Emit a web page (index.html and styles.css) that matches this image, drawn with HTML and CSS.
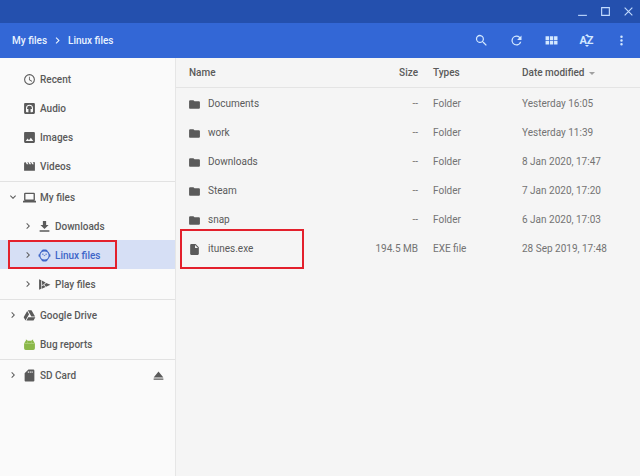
FILE: index.html
```html
<!DOCTYPE html>
<html lang="en">
<head>
    <meta charset="UTF-8" />
    <meta name="viewport" content="width=device-width, initial-scale=1.0" />
    <title>Files</title>
    <link rel="stylesheet" href="styles.css">
</head>
<body>
<svg class="sprite" aria-hidden="true">
    <symbol id="chevron" viewBox="0 0 24 24"><path d="M8.6 16.6 13.2 12 8.6 7.4 10 6l6 6-6 6z"/></symbol>
    <symbol id="folder" viewBox="0 0 24 24"><path d="M10 4H4a2 2 0 0 0-2 2v12c0 1.100.9 2 2 2h16a2 2 0 0 0 2-2V8a2 2 0 0 0-2-2h-8z"/></symbol>
</svg>

<div class="titlebar">
    <button class="window-btn" aria-label="Minimize"><svg viewBox="0 0 10 10"><path d="M1 8.500h8" /></svg></button>
    <button class="window-btn" aria-label="Maximize"><svg viewBox="0 0 10 10"><path d="M1.500 1.500h7v7h-7z" /></svg></button>
    <button class="window-btn" aria-label="Close"><svg viewBox="0 0 10 10"><path d="M1.500 1.500l7 7M8.500 1.500l-7 7" /></svg></button>
</div>

<header class="toolbar">
    <nav class="breadcrumb">
        <a href="#">My files</a>
        <svg class="icon"><use href="#chevron" /></svg>
        <a href="#">Linux files</a>
    </nav>
    <div class="actions">
        <button aria-label="Search"><svg viewBox="0 0 24 24"><path d="M15.500 14h-.8l-.3-.3A6.500 6.500 0 1 0 13.700 14.400l.3.3v.8l5 5 1.500-1.500zm-6 0a4.500 4.500 0 1 1 0-9 4.500 4.500 0 0 1 0 9z"/></svg></button>
        <button aria-label="Refresh"><svg viewBox="0 0 24 24"><path d="M17.650 6.350A8 8 0 1 0 19.730 14h-2.080A6 6 0 1 1 12 6c1.660 0 3.140.69 4.220 1.780L13 11h7V4z"/></svg></button>
        <button aria-label="Switch to thumbnail view"><svg viewBox="0 0 24 24"><path d="M2.500 5h5.500v6H2.500zM9.300 5h5.500v6H9.300zM16.100 5h5.500v6h-5.500zM2.500 12.500H8v6H2.500zM9.300 12.500h5.500v6H9.300zM16.100 12.500h5.500v6h-5.500z"/></svg></button>
        <button class="sort-btn" aria-label="Sort options"><span class="caret up"></span>AZ<span class="caret down"></span></button>
        <button aria-label="More"><svg viewBox="0 0 24 24"><path d="M12 8a2 2 0 1 0 0-4 2 2 0 0 0 0 4zm0 2a2 2 0 1 0 0 4 2 2 0 0 0 0-4zm0 6a2 2 0 1 0 0 4 2 2 0 0 0 0-4z"/></svg></button>
    </div>
</header>

<div class="content">
    <nav class="sidebar">
        <div class="group">
            <a class="item" href="#">
                <span class="chevron"></span>
                <svg class="icon" viewBox="0 0 24 24"><path d="M12 2a10 10 0 1 0 0 20 10 10 0 0 0 0-20zm0 18a8 8 0 1 1 0-16 8 8 0 0 1 0 16zM12.500 7H11v6l5.200 3.200.8-1.300-4.500-2.700z"/></svg>
                Recent
            </a>
            <a class="item" href="#">
                <span class="chevron"></span>
                <svg class="icon" viewBox="0 0 24 24"><path fill-rule="evenodd" d="M4 2h16a2 2 0 0 1 2 2v16a2 2 0 0 1-2 2H4a2 2 0 0 1-2-2V4c0-1.100.9-2 2-2zm8 3a6.500 6.500 0 0 0-6.500 6.500V17c0 1.100.9 2 2 2H10v-6H7.500v-1.500a4.500 4.500 0 0 1 9 0V13H14v6h2.500a2 2 0 0 0 2-2v-5.500A6.500 6.500 0 0 0 12 5z"/></svg>
                Audio
            </a>
            <a class="item" href="#">
                <span class="chevron"></span>
                <svg class="icon" viewBox="0 0 24 24"><path fill-rule="evenodd" d="M4 2h16a2 2 0 0 1 2 2v16a2 2 0 0 1-2 2H4a2 2 0 0 1-2-2V4c0-1.100.9-2 2-2zm1 16.500h14l-4.500-6-3.500 4.500-2.500-3z"/></svg>
                Images
            </a>
            <a class="item" href="#">
                <span class="chevron"></span>
                <svg class="icon" viewBox="0 0 24 24"><path d="m18 4 2 4h-3l-2-4h-2l2 4h-3l-2-4H8l2 4H7L5 4H4a2 2 0 0 0-2 2v14h20V4z"/></svg>
                Videos
            </a>
        </div>
        <div class="group">
            <a class="item" href="#">
                <svg class="chevron open"><use href="#chevron" /></svg>
                <svg class="icon" viewBox="0 0 24 24"><path fill-rule="evenodd" d="M20 18c1.100 0 2-.9 2-2V5a2 2 0 0 0-2-2H4a2 2 0 0 0-2 2v11c0 1.100.9 2 2 2H0v3h24v-3zM4.500 5.500h15v10h-15z"/></svg>
                My files
            </a>
            <a class="item sub" href="#">
                <svg class="chevron"><use href="#chevron" /></svg>
                <svg class="icon" viewBox="0 0 24 24"><path d="M19.500 9H15V2H9v7H4.500l7.500 7.500zM3 19v2.500h18V19z"/></svg>
                Downloads
            </a>
            <a class="item sub selected" href="#">
                <svg class="chevron"><use href="#chevron" /></svg>
                <svg class="icon" viewBox="0 0 24 24"><path fill-rule="evenodd" d="M7 2.500 9 1h6l2 1.500 1 1.800a10 10 0 0 1 3.500 5.200L23 10v4l-1.500.5a10 10 0 0 1-3.500 5.200l-1 1.800-2 1.500H9l-2-1.500-1-1.800a10 10 0 0 1-3.500-5.200L1 14v-4l1.500-.5A10 10 0 0 1 6 4.300zM12 4.500a7.500 7.500 0 1 0 0 15 7.500 7.500 0 0 0 0-15z"/><circle cx="9" cy="9.500" r="1.300"/><circle cx="15" cy="9.500" r="1.300"/><path d="M10 11.500h4l-2 2z"/></svg>
                Linux files
                <span class="highlight"></span>
            </a>
            <a class="item sub" href="#">
                <svg class="chevron"><use href="#chevron" /></svg>
                <svg class="icon" viewBox="0 0 24 24"><path d="M2 2.500 6 4v16l-4 1.500zM7 4.500l7 4-6 5.500zM15 9l8 3.500-8 3.500-3.500-3.700zM7 15.200l3.500-2 3.500 3.300-7 3.500z"/></svg>
                Play files
            </a>
        </div>
        <div class="group">
            <a class="item" href="#">
                <svg class="chevron"><use href="#chevron" /></svg>
                <svg class="icon" viewBox="0 0 24 24"><path d="M7.700 3.500 1.200 15l3.400 6 6.600-11.500zM9.700 15l-3.400 6h13.100l3.400-6zM22.300 14 15.700 2.500H8.900L15.400 14z"/></svg>
                Google Drive
            </a>
            <a class="item" href="#">
                <span class="chevron"></span>
                <svg class="icon green" viewBox="0 0 24 24"><path d="M5 3h2l1.500 2h7L17 3h2l-.5 2.500c1.500.7 2.500 2 2.500 3.500h1v10a3 3 0 0 1-3 3H5a3 3 0 0 1-3-3V9h1c0-1.500 1-2.800 2.500-3.500z"/><path class="light" d="M2 9.500h20v1H2zM8 7h1.200v1.200H8zM15 7h1.200v1.200H15z"/></svg>
                Bug reports
            </a>
        </div>
        <div class="group">
            <a class="item" href="#">
                <svg class="chevron"><use href="#chevron" /></svg>
                <svg class="icon" viewBox="0 0 24 24"><path fill-rule="evenodd" d="M19 1h-9L3 8v13c0 1.100.9 2 2 2h14a2 2 0 0 0 2-2V3a2 2 0 0 0-2-2zM9 7.500h1.500V4H9zm3.500 0H14V4h-1.500zm3.500 0h1.500V4H16z"/></svg>
                SD Card
                <svg class="icon eject" viewBox="0 0 24 24"><path d="M3 17.500h18V20H3zM12 4.500 3 15.500h18z"/></svg>
            </a>
        </div>
    </nav>

    <main class="files">
        <table>
            <thead>
                <tr>
                    <th class="name">Name</th>
                    <th class="size">Size</th>
                    <th class="type">Types</th>
                    <th class="date">Date modified<span class="caret down"></span></th>
                </tr>
            </thead>
            <tbody>
                <tr>
                    <td class="name"><svg class="icon"><use href="#folder" /></svg>Documents</td>
                    <td class="size">--</td>
                    <td>Folder</td>
                    <td>Yesterday 16:05</td>
                </tr>
                <tr>
                    <td class="name"><svg class="icon"><use href="#folder" /></svg>work</td>
                    <td class="size">--</td>
                    <td>Folder</td>
                    <td>Yesterday 11:39</td>
                </tr>
                <tr>
                    <td class="name"><svg class="icon"><use href="#folder" /></svg>Downloads</td>
                    <td class="size">--</td>
                    <td>Folder</td>
                    <td>8 Jan 2020, 17:47</td>
                </tr>
                <tr>
                    <td class="name"><svg class="icon"><use href="#folder" /></svg>Steam</td>
                    <td class="size">--</td>
                    <td>Folder</td>
                    <td>7 Jan 2020, 17:20</td>
                </tr>
                <tr>
                    <td class="name"><svg class="icon"><use href="#folder" /></svg>snap</td>
                    <td class="size">--</td>
                    <td>Folder</td>
                    <td>6 Jan 2020, 17:03</td>
                </tr>
                <tr>
                    <td class="name"><svg class="icon" viewBox="0 0 24 24"><path fill-rule="evenodd" d="M6 2a2 2 0 0 0-2 2v16c0 1.100.9 2 2 2h12a2 2 0 0 0 2-2V8l-6-6zm7 7V3.500L18.500 9z"/></svg>itunes.exe<span class="highlight"></span></td>
                    <td class="size">194.5 MB</td>
                    <td>EXE file</td>
                    <td>28 Sep 2019, 17:48</td>
                </tr>
            </tbody>
        </table>
    </main>
</div>
</body>
</html>
```
FILE: styles.css
```css
* {
    box-sizing: border-box;
}

body {
    margin: 0;
    min-height: 100vh;
    display: flex;
    flex-direction: column;
    font-family: Roboto, "Liberation Sans", sans-serif;
    font-size: 10px;
    color: #5a5a5a;
    background: #f5f5f5;
}

a {
    color: inherit;
    text-decoration: none;
}

button {
    display: flex;
    align-items: center;
    justify-content: center;
    padding: 0;
    border: none;
    background: none;
    font: inherit;
    color: inherit;
    cursor: pointer;
}

svg {
    fill: currentColor;
    flex: none;
}

.sprite {
    display: none;
}

.icon {
    width: 13px;
    height: 13px;
}

/* window frame */
.titlebar {
    display: flex;
    justify-content: flex-end;
    height: 23px;
    background: #2450ae;
    color: #c3dcff;
}

.window-btn {
    width: 23px;
}

.window-btn svg {
    width: 11px;
    height: 11px;
    fill: none;
    stroke: currentColor;
}

.toolbar {
    display: flex;
    justify-content: space-between;
    height: 35px;
    padding: 0 1px 0 12px;
    background: #3367d6;
    color: #e8f3ff;
}

.breadcrumb {
    display: flex;
    align-items: center;
    gap: 4px;
    font-weight: 500;
}

.actions {
    display: flex;
    color: #d3e8ff;
}

.actions button {
    width: 35px;
}

.actions svg {
    width: 15px;
    height: 15px;
}

.actions .sort-btn {
    flex-direction: column;
    font-size: 11px;
    font-weight: 700;
    line-height: 9px;
}

.caret {
    border: 2px solid transparent;
}

.caret.up {
    border-top: none;
    border-bottom-color: currentColor;
}

.caret.down {
    border-bottom: none;
    border-top-color: currentColor;
}

.content {
    flex: 1;
    display: flex;
}

/* sidebar */
.sidebar {
    flex: none;
    width: 176px;
    padding-top: 6px;
    background: #fafafa;
    border-right: 1px solid #e6e6e6;
    font-weight: 500;
}

.group {
    padding-bottom: 1px;
    border-bottom: 1px solid #e2e2e2;
}

.group:last-child {
    border-bottom: none;
}

.item {
    position: relative;
    display: flex;
    align-items: center;
    gap: 4px;
    height: 29px;
    padding: 1px 10px 0 7px;
}

.item.sub {
    padding-left: 22px;
}

.item.selected {
    background: #d6dff5;
    color: #3f66c8;
}

.chevron {
    width: 12px;
    height: 12px;
    color: #5a5a5a;
}

.chevron.open {
    transform: rotate(90deg);
}

.green {
    color: #8bb84a;
}

.light {
    fill: #c5e0a0;
}

.eject {
    margin-left: auto;
}

/* file list */
.files {
    flex: 1;
}

table {
    width: 100%;
    table-layout: fixed;
    border-collapse: separate;
    border-spacing: 0;
}

th,
td {
    height: 29px;
    padding: 0;
    text-align: left;
    white-space: nowrap;
}

th {
    height: 30px;
    font-weight: 500;
    border-bottom: 1px solid #e4e4e4;
}

td {
    padding-top: 2px;
    color: #737373;
}

th.name {
    padding-left: 13px;
}

td.name {
    position: relative;
    padding-left: 12px;
    color: #5a5a5a;
}

td.name .icon {
    margin: -4px 7px -4px 0;
    vertical-align: middle;
}

.size {
    width: 80px;
    padding-right: 15px;
    text-align: right;
}

.type {
    width: 89px;
}

.date {
    width: 118px;
}

.date .caret {
    display: inline-block;
    margin-left: 4px;
    border-width: 3px;
    border-bottom: none;
    border-top-color: #a0a0a0;
    vertical-align: middle;
}

/* red outline round the marked entries */
.highlight {
    position: absolute;
    border: 2px solid #e3202c;
}

.item .highlight {
    top: 0;
    bottom: 0;
    left: 8px;
    width: 109px;
}

td .highlight {
    top: -4px;
    bottom: -7px;
    left: 4px;
    width: 124px;
}
```
